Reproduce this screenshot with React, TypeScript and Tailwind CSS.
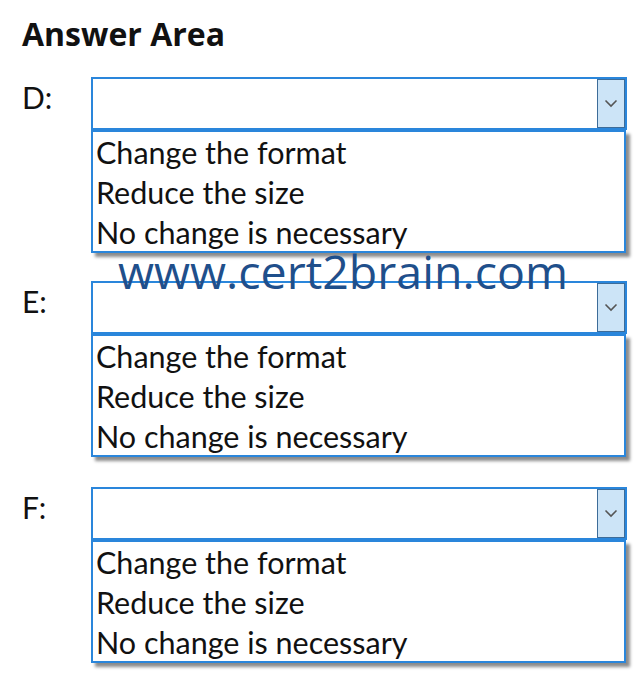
const OPTIONS = ['Change the format', 'Reduce the size', 'No change is necessary'];

function Chevron() {
  return (
    <svg width="14" height="9" viewBox="0 0 14 9" fill="none">
      <path d="M1.5 1.5 L7 7 L12.5 1.5" stroke="#555" strokeWidth="1.6" />
    </svg>
  );
}

function Dropdown({ label, gap }: { label: string; gap: string }) {
  return (
    <div className={`flex ${gap}`}>
      <div className="w-[69px] pt-0 text-[30px] leading-[40px] text-[#111]">{label}</div>
      <div className="flex flex-col">
        <div className="flex h-[53px] w-[536px] border-2 border-[#2a86db] bg-white">
          <div className="flex-1" />
          <div className="flex w-[28px] items-center justify-center border border-[#3d6c99] bg-[#cce4f7]">
            <Chevron />
          </div>
        </div>
        <div className="h-[123px] w-[535px] border-2 border-[#2a86db] bg-white pl-[3px] shadow-[4px_4px_3px_rgba(0,0,0,0.45)]">
          {OPTIONS.map(o => (
            <div key={o} className="text-[30.5px] leading-[40px] text-[#111]">
              {o}
            </div>
          ))}
        </div>
      </div>
    </div>
  );
}

export default function App() {
  return (
    <div className="relative h-[682px] w-[641px] bg-white pl-[22px] pt-[14px]" style={{ fontFamily: 'Lato, "Liberation Sans", sans-serif' }}>
      <h1 className="text-[32px] font-bold leading-[40px] text-[#111]" style={{ fontFamily: '"Open Sans", sans-serif' }}>
        Answer Area
      </h1>
      <Dropdown label="D:" gap="mt-[23px]" />
      <Dropdown label="E:" gap="mt-[28px]" />
      <Dropdown label="F:" gap="mt-[30px]" />
      <div
        className="absolute left-[118px] top-[243px] text-[46.5px] leading-[56px] text-[#1f4f8b]"
        style={{ fontFamily: '"Open Sans", sans-serif' }}
      >
        www.cert2brain.com
      </div>
    </div>
  );
}
